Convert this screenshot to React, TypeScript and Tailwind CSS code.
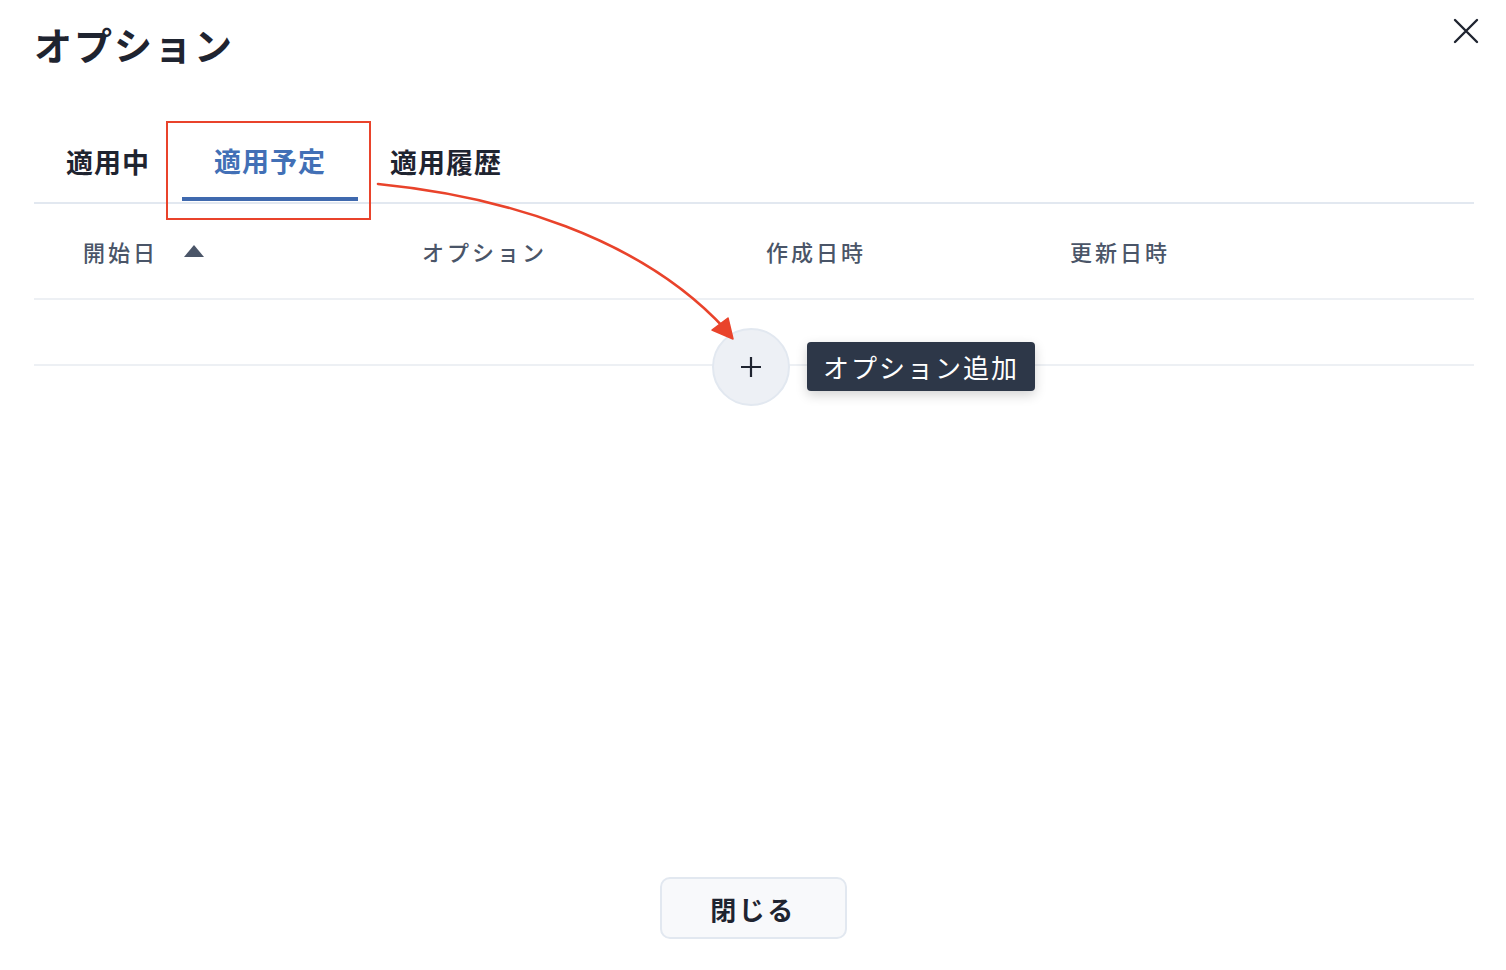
import React from "react";

const font = "font-['Noto_Sans_CJK_JP','Noto_Sans',sans-serif]";

export default function App() {
  return (
    <div className={`relative flex h-[970px] w-full flex-col bg-white pl-[34px] pr-[32px] text-[#1a202c] ${font}`}>
      {/* Header */}
      <div className="flex items-start justify-between pt-[25px]">
        <h1 className="text-[38px] font-bold leading-none tracking-[2px] text-[#1f2430]">オプション</h1>
        <button className="-mr-[10px] mt-[-12px] flex h-[36px] w-[36px] items-center justify-center text-[#1f2430]">
          <svg width="28" height="28" viewBox="0 0 28 28" fill="none" stroke="currentColor" strokeWidth="2.4" strokeLinecap="round">
            <path d="M3 3 L25 25 M25 3 L3 25" />
          </svg>
        </button>
      </div>

      {/* Tabs */}
      <div className="mt-[59px] flex border-b-2 border-[#e2e8f0]">
        <div className="flex h-[80px] items-center px-[32px] text-[27px] font-bold tracking-[1px] text-[#1f2430]">適用中</div>
        <div className="relative flex h-[80px] items-center px-[32px] text-[27px] font-bold tracking-[1px] text-[#4270b6]">
          <span className="-mt-[2px]">適用予定</span>
          <div className="absolute bottom-[1px] left-0 right-0 h-[4px] bg-[#3f69ae]" />
        </div>
        <div className="flex h-[80px] items-center px-[32px] text-[27px] font-bold tracking-[1px] text-[#1f2430]">適用履歴</div>
      </div>

      {/* Table header */}
      <div className="grid h-[96px] grid-cols-[340px_343px_305px_1fr] items-center border-b-2 border-[#edf0f4] text-[22px] font-medium tracking-[3px] text-[#4a5568]">
        <div className="flex items-center pl-[49px]">
          <span>開始日</span>
          <svg className="ml-[26px]" width="20" height="12" viewBox="0 0 20 12">
            <path d="M10 0 L20 12 L0 12 Z" fill="#4a5568" />
          </svg>
        </div>
        <div className="pl-[48px]">オプション</div>
        <div className="pl-[49px]">作成日時</div>
        <div className="pl-[48px]">更新日時</div>
      </div>

      {/* Empty row */}
      <div className="h-[66px] border-b-2 border-[#edf0f4]" />

      <div className="flex-1" />

      {/* Footer */}
      <div className="flex justify-center pb-[31px] pr-[2px]">
        <button className="flex h-[62px] w-[187px] items-center justify-center rounded-[10px] border-2 border-[#e2e8f0] bg-[#f8f9fb] text-[26px] font-bold tracking-[2.5px] text-[#1f2430]">
          閉じる
        </button>
      </div>

      {/* Add button overlay */}
      <button className="absolute left-[712px] top-[328px] flex h-[78px] w-[78px] items-center justify-center rounded-full border-2 border-[#e2e8f0] bg-[#edf0f5] text-[#1f2430]">
        <svg width="22" height="22" viewBox="0 0 22 22" stroke="currentColor" strokeWidth="2.2">
          <path d="M11 1 V21 M1 11 H21" />
        </svg>
      </button>

      {/* Tooltip */}
      <div className="absolute left-[807px] top-[342px] flex h-[49px] w-[228px] items-center justify-center rounded-[4px] bg-[#2d3748] text-[26px] font-normal tracking-[2px] text-white shadow-[0_4px_12px_rgba(0,0,0,0.18)]">
        オプション追加
      </div>

      {/* Annotation rectangle */}
      <div className="pointer-events-none absolute left-[166px] top-[121px] h-[99px] w-[205px] border-[2.5px] border-[#e9432b]" />

      {/* Annotation arrow */}
      <svg className="pointer-events-none absolute left-0 top-0" width="1506" height="970" viewBox="0 0 1506 970" fill="none">
        <path d="M378 184 C 500 196, 640 236, 726 330" stroke="#e9432b" strokeWidth="2.6" strokeLinecap="round" />
        <path d="M733 339 L712 330 L728 318 Z" fill="#e9432b" stroke="#e9432b" strokeWidth="1.5" strokeLinejoin="round" />
      </svg>
    </div>
  );
}
